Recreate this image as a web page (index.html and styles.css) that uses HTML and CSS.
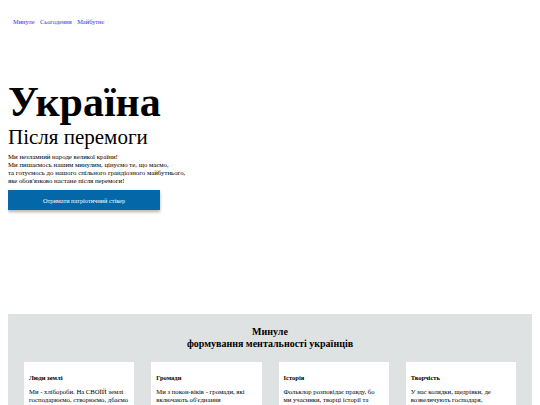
FILE: index.html
```html
<!DOCTYPE html>
<html lang="uk">
<head>
<meta charset="utf-8">
<title>Україна</title>
<link rel="stylesheet" href="styles.css">
</head>
<body>
<nav class="nav">
  <a href="#past">Минуле</a>
  <a href="#present">Сьогодення</a>
  <a href="#future">Майбутнє</a>
</nav>
<header class="hero">
  <h1 class="hero-title">Україна</h1>
  <h2 class="hero-sub">Після перемоги</h2>
  <p class="hero-text">Ми незламний народе великої країни!<br>Ми пишаємось нашим минулим, цінуємо те, що маємо,<br>та готуємось до нашого спільного грандіозного майбутнього,<br>яке обов'язково настане після перемоги!</p>
  <button class="hero-btn">Отримати патріотичний стікер</button>
</header>
<section class="past" id="past">
  <h3 class="past-title">Минуле<br>формування ментальності українців</h3>
  <div class="cards">
    <div class="card">
      <h4 class="card-title">Люди землі</h4>
      <p class="card-text">Ми - хлібороби. На СВОЇЙ землі господарюємо, створюємо, дбаємо</p>
    </div>
    <div class="card">
      <h4 class="card-title">Громади</h4>
      <p class="card-text">Ми з покон-віків - громади, які включають об'єднання</p>
    </div>
    <div class="card">
      <h4 class="card-title">Історія</h4>
      <p class="card-text">Фольклор розповідає правду, бо ми учасники, творці історії та</p>
    </div>
    <div class="card">
      <h4 class="card-title">Творчість</h4>
      <p class="card-text">У нас колядки, щедрівки, де возвеличують господаря,</p>
    </div>
  </div>
</section>
</body>
</html>
```
FILE: styles.css
```css
html, body {
  margin: 0;
  padding: 0;
}
body {
  margin: 8px;
  font-family: "Liberation Serif", "Times New Roman", serif;
  color: #000;
  background: #fff;
}
.nav {
  display: flex;
  gap: 5.5px;
  padding: 9px 0 0 5px;
  font-size: 6.4px;
  line-height: 10px;
}
.nav a {
  color: #3333ee;
  text-decoration: none;
}
.hero {
  padding-top: 52px;
}
.hero-title {
  margin: 0;
  font-size: 42px;
  line-height: 46px;
  font-weight: bold;
}
.hero-sub {
  margin: 0;
  font-size: 21px;
  line-height: 24px;
  font-weight: normal;
}
.hero-text {
  margin: 4px 0 0;
  font-size: 6.8px;
  line-height: 8px;
}
.hero-btn {
  display: block;
  margin-top: 5px;
  width: 152px;
  height: 20px;
  border: none;
  background: #0467a7;
  color: #fff;
  font-family: inherit;
  font-size: 6.3px;
  box-shadow: 0 2px 3px rgba(0,0,0,0.3);
}
.past {
  margin-top: 104px;
  background: #dfe2e3;
  padding: 12px 16px 0;
}
.past-title {
  margin: 0;
  text-align: center;
  font-size: 10px;
  line-height: 12px;
  font-weight: bold;
}
.cards {
  display: grid;
  grid-template-columns: repeat(4, 1fr);
  gap: 17px;
  margin-top: 12px;
}
.card {
  background: #fff;
  padding: 12px 5px 8px;
  min-height: 60px;
}
.card-title {
  margin: 0;
  font-size: 6.5px;
  line-height: 8px;
  font-weight: bold;
}
.card-text {
  margin: 6px 0 0;
  font-size: 6.7px;
  line-height: 8px;
}
```
